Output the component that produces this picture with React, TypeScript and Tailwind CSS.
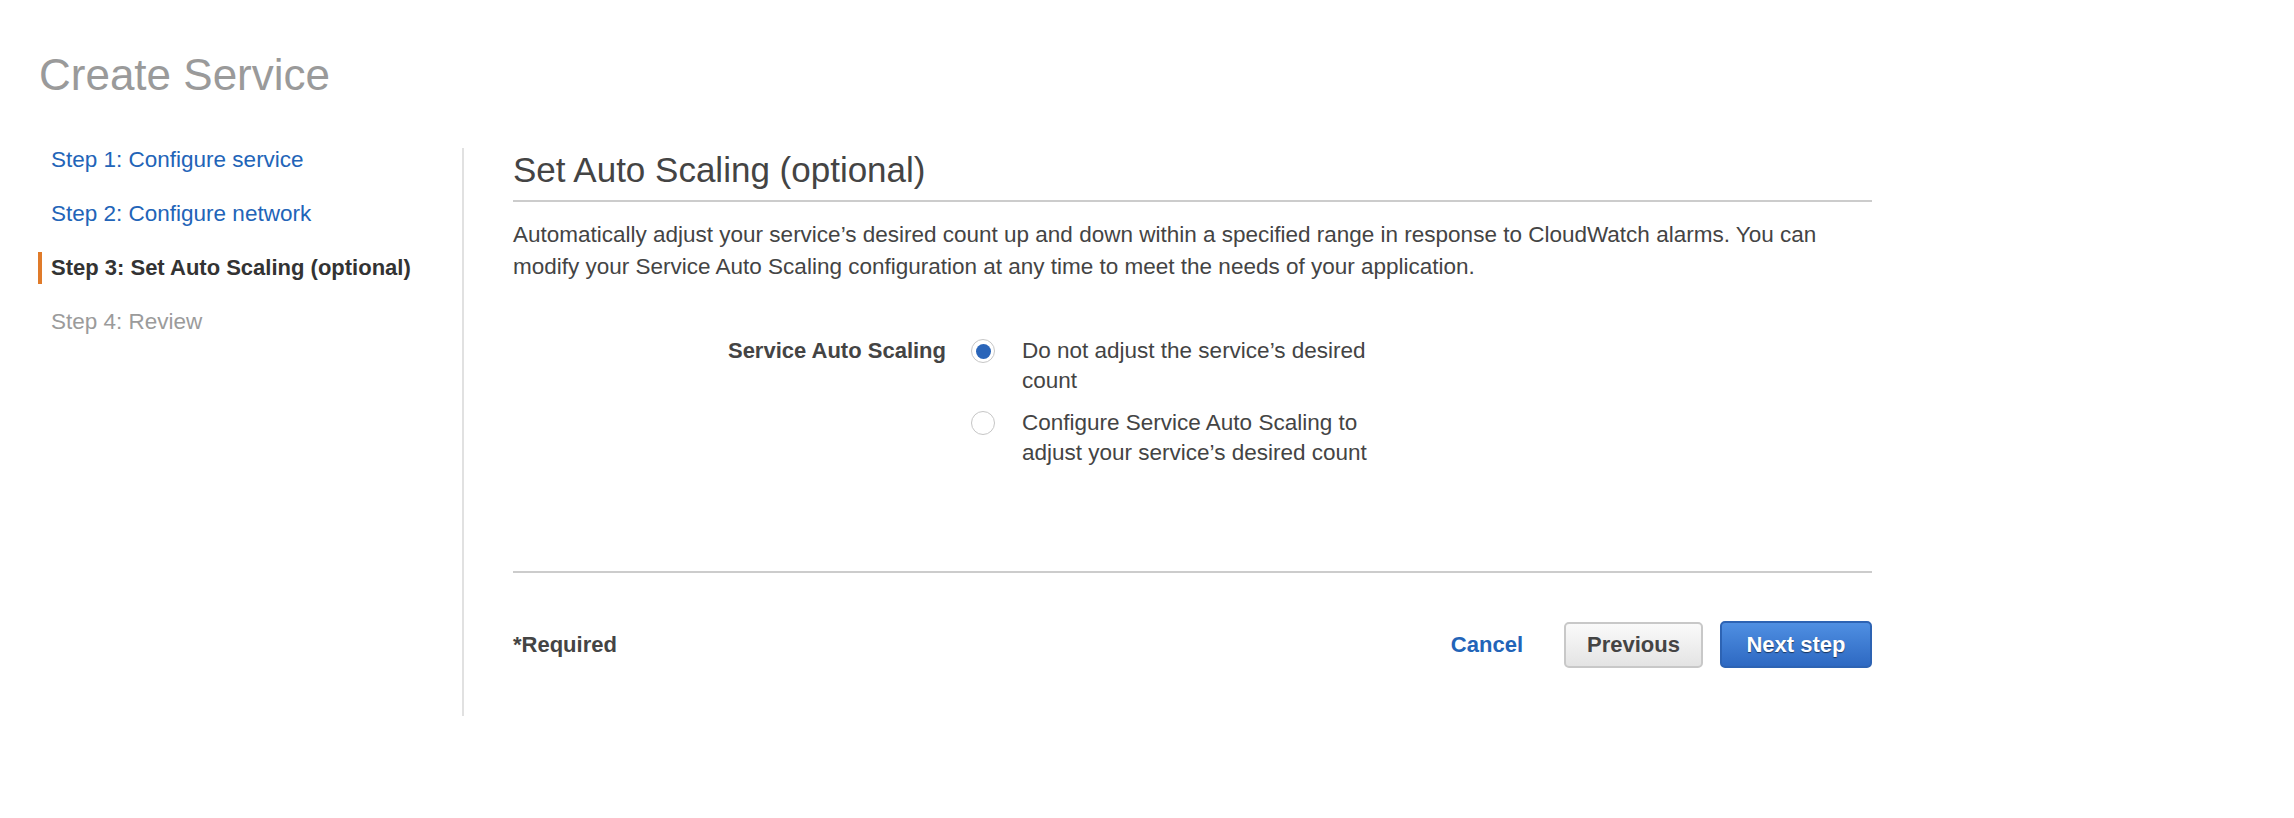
import React from "react";

const steps = [
  { label: "Step 1: Configure service", state: "link" },
  { label: "Step 2: Configure network", state: "link" },
  { label: "Step 3: Set Auto Scaling (optional)", state: "active" },
  { label: "Step 4: Review", state: "disabled" },
];

function Radio({ checked }: { checked: boolean }) {
  return (
    <span className="mt-[3px] flex h-[24px] w-[24px] shrink-0 items-center justify-center rounded-full border-[1.5px] border-[#c6c6c6] bg-white">
      {checked && <span className="h-[15px] w-[15px] rounded-full bg-[#2a65b9]" />}
    </span>
  );
}

export default function App() {
  return (
    <div className="min-h-[818px] w-full bg-white font-['Liberation_Sans',Arial,sans-serif] text-[#444]">
      <h1 className="pl-[39px] pt-[49px] text-[44px] font-normal leading-[52px] text-[#9a9a9a]">
        Create Service
      </h1>

      <div className="mt-[43px] flex">
        <nav className="flex w-[462px] shrink-0 flex-col gap-[22px] pl-[38px]">
          {steps.map((s) => (
            <div
              key={s.label}
              className={
                s.state === "active"
                  ? "border-l-4 border-[#e07b2a] pl-[9px] text-[22px] font-bold leading-[32px] text-[#333]"
                  : s.state === "link"
                  ? "border-l-4 border-transparent pl-[9px] text-[22.5px] leading-[32px] text-[#2264b8]"
                  : "border-l-4 border-transparent pl-[9px] text-[22.5px] leading-[32px] text-[#9b9b9b]"
              }
            >
              {s.label}
            </div>
          ))}
        </nav>

        <div className="mt-[4px] border-l-2 border-[#e1e1e1] pb-[48px] pl-[49px]">
          <div className="w-[1359px]">
            <h2 className="border-b-2 border-[#cccccc] pb-[10px] pt-[2px] text-[35px] font-normal leading-[40px] text-[#444]">
              Set Auto Scaling (optional)
            </h2>
            <p className="mt-[17px] max-w-[1330px] text-[22.5px] leading-[32px] text-[#444]">
              Automatically adjust your service’s desired count up and down within a specified range in response to
              CloudWatch alarms. You can modify your Service Auto Scaling configuration at any time to meet the needs of
              your application.
            </p>

            <div className="mt-[53px] flex">
              <div className="w-[433px] shrink-0 text-right text-[22px] font-bold leading-[30px] text-[#444]">
                Service Auto Scaling
              </div>
              <div className="ml-[25px] flex flex-col gap-[12px]">
                <label className="flex">
                  <Radio checked />
                  <span className="ml-[27px] w-[365px] text-[22.5px] leading-[30px] text-[#444]">
                    Do not adjust the service’s desired count
                  </span>
                </label>
                <label className="flex">
                  <Radio checked={false} />
                  <span className="ml-[27px] w-[365px] text-[22.5px] leading-[30px] text-[#444]">
                    Configure Service Auto Scaling to adjust your service’s desired count
                  </span>
                </label>
              </div>
            </div>

            <div className="mt-[103px] border-t-2 border-[#cccccc]" />

            <div className="mt-[48px] flex items-center justify-between">
              <span className="text-[22px] font-bold text-[#444]">*Required</span>
              <div className="flex items-center">
                <button className="text-[22px] font-bold text-[#2264b8]">Cancel</button>
                <button className="ml-[41px] h-[46px] w-[139px] rounded-[5px] border-2 border-[#c8c8c8] bg-gradient-to-b from-[#fafafa] to-[#e4e4e4] text-[22px] font-bold text-[#444]">
                  Previous
                </button>
                <button className="ml-[17px] h-[47px] w-[152px] rounded-[5px] border-2 border-[#2d63b3] bg-gradient-to-b from-[#4f8fe2] to-[#2e69c2] text-[22px] font-bold text-white [text-shadow:0_1px_1px_rgba(0,0,0,0.55)]">
                  Next step
                </button>
              </div>
            </div>
          </div>
        </div>
      </div>
    </div>
  );
}
